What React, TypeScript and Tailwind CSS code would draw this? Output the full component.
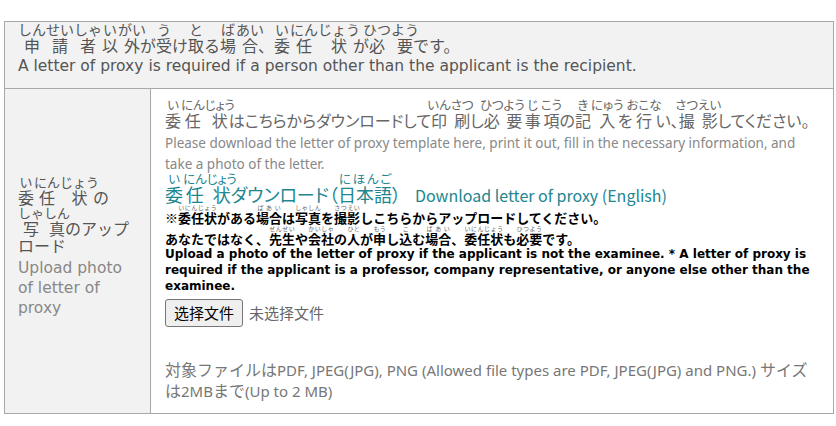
import React from "react";

const JP = "font-['Noto_Sans_CJK_JP',sans-serif]";
const NS = "font-['Noto_Sans','Noto_Sans_CJK_JP',sans-serif]";
const DV = "font-['DejaVu_Sans','Noto_Sans_CJK_JP',sans-serif]";

function R({ b, t, rt }: { b: string; t: string; rt: string }) {
  return (
    <ruby>
      {b}
      <rt className={rt}>{t}</rt>
    </ruby>
  );
}

export default function App() {
  const rtTop = "text-[14px] leading-[14px] text-[#555]";
  const rtLeft = "text-[13px] leading-[13px] text-[#555]";
  const rtMid = "text-[12.5px] leading-[13px] text-[#666]";
  const rtLink = "text-[12.5px] leading-[13px] text-[#21868f]";
  const rtTiny = "text-[6px] leading-[7px] font-normal text-[#666]";
  return (
    <div className="w-[836px] h-[426px] bg-white pt-[21px] pl-[4px]">
      <div className="w-[830px] border border-[#a8a8a8]">
        {/* top box */}
        <div className="bg-[#f2f2f2] h-[66px] px-[13px] pt-0">
          <div className={`${JP} text-[16px] leading-[18px] text-[#555]`}>
            <R b="申" t="しん" rt={rtTop} />
            <R b="請" t="せい" rt={rtTop} />
            <R b="者" t="しゃ" rt={rtTop} />
            <R b="以" t="い" rt={rtTop} />
            <R b="外" t="がい" rt={rtTop} />が
            <R b="受" t="う" rt={rtTop} />け
            <R b="取" t="と" rt={rtTop} />る
            <R b="場" t="ば" rt={rtTop} />
            <R b="合" t="あい" rt={rtTop} />、
            <R b="委" t="い" rt={rtTop} />
            <R b="任" t="にん" rt={rtTop} />
            <R b="状" t="じょう" rt={rtTop} />が
            <R b="必" t="ひつ" rt={rtTop} />
            <R b="要" t="よう" rt={rtTop} />です。
          </div>
          <div className={`${DV} text-[15.5px] leading-[18px] mt-[3px] text-[#555]`}>
            A letter of proxy is required if a person other than the applicant is the recipient.
          </div>
        </div>
        {/* row */}
        <div className="flex border-t border-[#a8a8a8] h-[325px]">
          <div className="w-[146px] shrink-0 bg-[#f2f2f2] border-r border-[#a8a8a8] flex flex-col justify-center pl-[13px] pr-[6px] pb-[9px]">
            <div className={`${JP} text-[16px] leading-[17px] text-[#555]`}>
              <R b="委" t="い" rt={rtLeft} />
              <R b="任" t="にん" rt={rtLeft} />
              <R b="状" t="じょう" rt={rtLeft} />の
              <br />
              <R b="写" t="しゃ" rt={rtLeft} />
              <R b="真" t="しん" rt={rtLeft} />のアップロード
            </div>
            <div className={`${DV} text-[15.5px] leading-[20px] text-[#888] mt-[4px] pr-[8px]`}>
              Upload photo of letter of proxy
            </div>
          </div>
          <div className="flex-1 pl-[14px] pr-[12px] pt-[10px]">
            <div className={`${JP} text-[16px] leading-[18px] text-[#666] [font-feature-settings:'palt']`}>
              <R b="委" t="い" rt={rtMid} />
              <R b="任" t="にん" rt={rtMid} />
              <R b="状" t="じょう" rt={rtMid} />はこちらからダウンロードして
              <R b="印" t="いん" rt={rtMid} />
              <R b="刷" t="さつ" rt={rtMid} />し
              <R b="必" t="ひつ" rt={rtMid} />
              <R b="要" t="よう" rt={rtMid} />
              <R b="事" t="じ" rt={rtMid} />
              <R b="項" t="こう" rt={rtMid} />の
              <R b="記" t="き" rt={rtMid} />
              <R b="入" t="にゅう" rt={rtMid} />を
              <R b="行" t="おこな" rt={rtMid} />い、
              <R b="撮" t="さつ" rt={rtMid} />
              <R b="影" t="えい" rt={rtMid} />してください。
            </div>
            <div className={`${NS} text-[13.5px] leading-[21px] text-[#888] mt-[4px]`}>
              Please download the letter of proxy template here, print it out, fill in the necessary information, and take a photo of the letter.
            </div>
            <div className={`${JP} text-[#21868f] leading-[20px] mt-[-2px] [font-feature-settings:'palt']`}>
              <span className="text-[18px]">
                <R b="委" t="い" rt={rtLink} />
                <R b="任" t="にん" rt={rtLink} />
                <R b="状" t="じょう" rt={rtLink} />ダウンロード（
                <R b="日本語" t="にほんご" rt={rtLink} />）
              </span>
              <span className="text-[16px] ml-[14px]">Download letter of proxy (English)</span>
            </div>
            <div className={`${JP} text-[13px] font-bold leading-[14px] text-black mt-[-1px]`}>
              <div>
                ※<R b="委任状" t="いにんじょう" rt={rtTiny} />がある
                <R b="場合" t="ばあい" rt={rtTiny} />は
                <R b="写真" t="しゃしん" rt={rtTiny} />を
                <R b="撮影" t="さつえい" rt={rtTiny} />しこちらからアップロードしてください。
              </div>
              <div>
                あなたではなく、
                <R b="先生" t="せんせい" rt={rtTiny} />や
                <R b="会社" t="かいしゃ" rt={rtTiny} />の
                <R b="人" t="ひと" rt={rtTiny} />が
                <R b="申" t="もう" rt={rtTiny} />し
                <R b="込" t="こ" rt={rtTiny} />む
                <R b="場合" t="ばあい" rt={rtTiny} />、
                <R b="委任状" t="いにんじょう" rt={rtTiny} />も
                <R b="必要" t="ひつよう" rt={rtTiny} />です。
              </div>
            </div>
            <div className={`${DV} text-[12px] font-bold leading-[16px] text-black`}>
              Upload a photo of the letter of proxy if the applicant is not the examinee. * A letter of proxy is required if the applicant is a professor, company representative, or anyone else other than the examinee.
            </div>
            <div className={`${JP} flex items-center mt-[5px]`}>
              <button className="h-[28px] px-[8px] bg-[#efefef] border border-[#767676] rounded-[3px] text-[15px] text-black">
                选择文件
              </button>
              <span className="ml-[6px] text-[15px] text-[#666]">未选择文件</span>
            </div>
            <div className={`${NS} text-[15px] leading-[21px] text-[#777] mt-[33px]`}>
              <span className="text-[16px]">対象ファイルは</span>PDF, JPEG(JPG), PNG (Allowed file types are PDF, JPEG(JPG) and PNG.) <span className="text-[16px]">サイズは</span>2MB<span className="text-[16px]">まで</span>(Up to 2 MB)
            </div>
          </div>
        </div>
      </div>
    </div>
  );
}
